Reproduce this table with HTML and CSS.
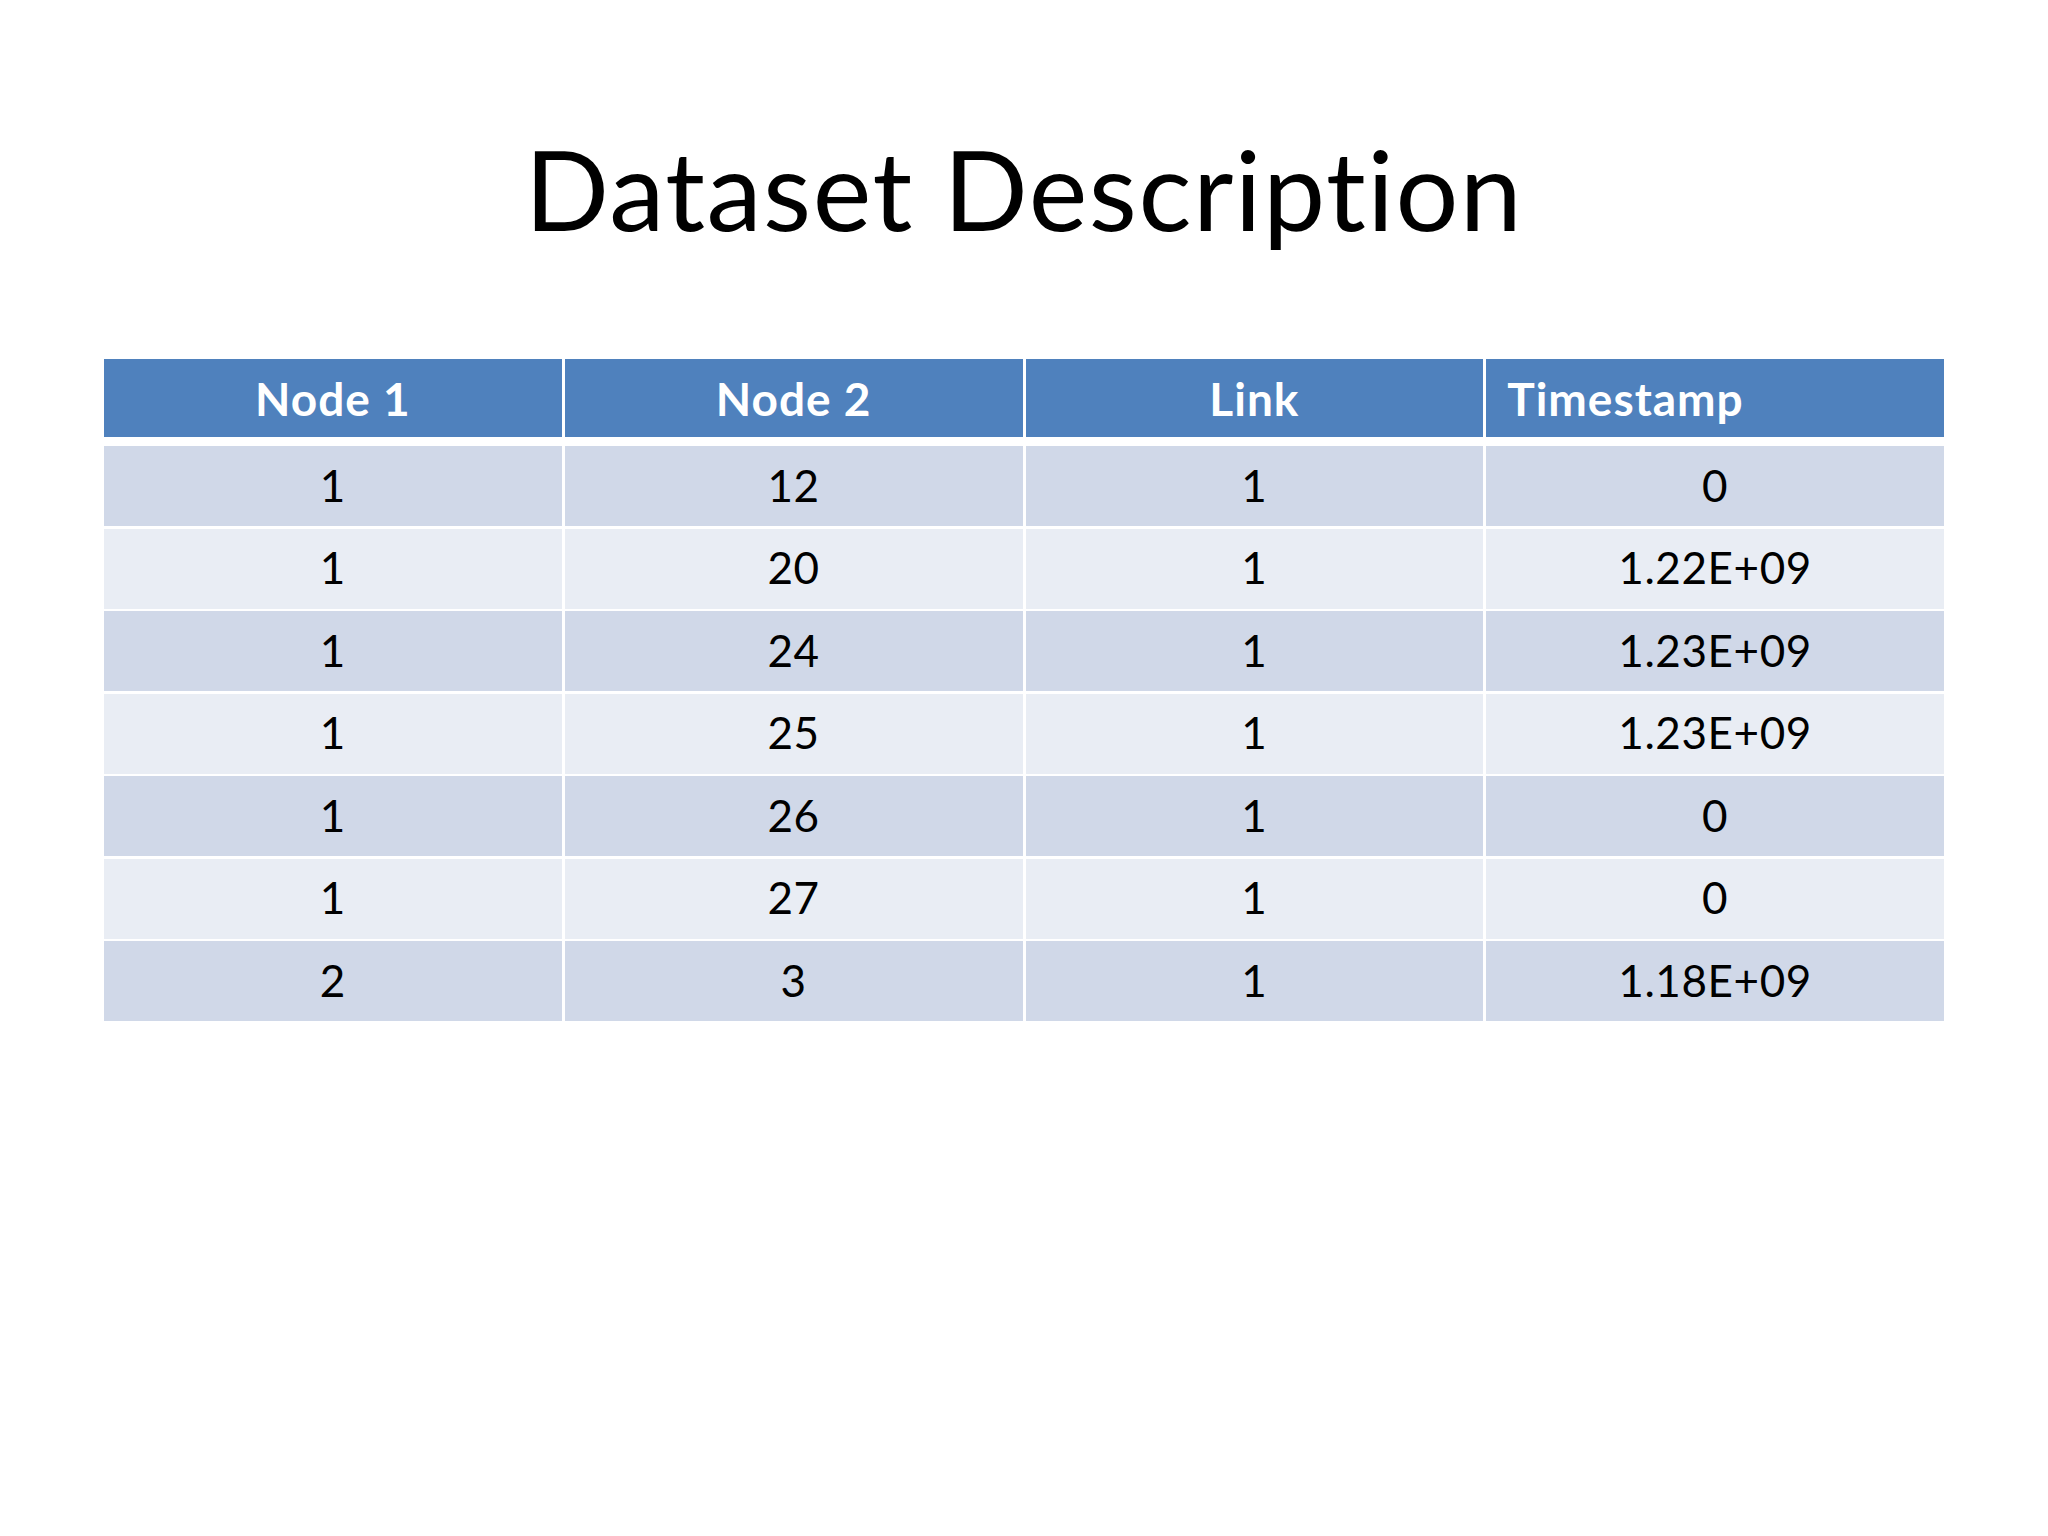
FILE: index.html
```html
<!DOCTYPE html>
<html lang="en">
<head>
<meta charset="utf-8">
<title>Dataset Description</title>
<link rel="stylesheet" href="styles.css">
</head>
<body>
<main class="slide">
  <h1 class="title">Dataset Description</h1>
  <div class="table">
    <div class="row head">
      <div class="cell">Node 1</div>
      <div class="cell">Node 2</div>
      <div class="cell">Link</div>
      <div class="cell left">Timestamp</div>
    </div>
    <div class="row odd">
      <div class="cell">1</div><div class="cell">12</div><div class="cell">1</div><div class="cell">0</div>
    </div>
    <div class="row even">
      <div class="cell">1</div><div class="cell">20</div><div class="cell">1</div><div class="cell">1.22E+09</div>
    </div>
    <div class="row odd">
      <div class="cell">1</div><div class="cell">24</div><div class="cell">1</div><div class="cell">1.23E+09</div>
    </div>
    <div class="row even">
      <div class="cell">1</div><div class="cell">25</div><div class="cell">1</div><div class="cell">1.23E+09</div>
    </div>
    <div class="row odd">
      <div class="cell">1</div><div class="cell">26</div><div class="cell">1</div><div class="cell">0</div>
    </div>
    <div class="row even">
      <div class="cell">1</div><div class="cell">27</div><div class="cell">1</div><div class="cell">0</div>
    </div>
    <div class="row odd">
      <div class="cell">2</div><div class="cell">3</div><div class="cell">1</div><div class="cell">1.18E+09</div>
    </div>
  </div>
</main>
</body>
</html>
```

FILE: styles.css
```css
html, body {
  margin: 0;
  padding: 0;
  background: #ffffff;
}

.slide {
  width: 2048px;
  height: 1536px;
  display: flex;
  flex-direction: column;
  align-items: center;
  font-family: Lato, "Liberation Sans", sans-serif;
  font-variant-ligatures: none;
  color: #000000;
}

.title {
  margin: 0;
  padding-top: 133px;
  font-size: 111px;
  line-height: 110px;
  letter-spacing: 1.5px;
  font-weight: 400;
  text-align: center;
}

.table {
  margin-top: 116px;
  width: 1840px;
  display: flex;
  flex-direction: column;
  gap: 2.5px;
}

.row {
  display: grid;
  grid-template-columns: repeat(4, 1fr);
  column-gap: 3px;
  height: 80px;
}

.row.head {
  height: 78px;
  margin-bottom: 6.5px;
}

.cell {
  display: flex;
  align-items: center;
  justify-content: center;
  font-size: 44px;
  letter-spacing: 0.6px;
  padding-bottom: 3px;
  box-sizing: border-box;
}

.head .cell {
  background: #4f81bd;
  color: #ffffff;
  font-weight: 700;
  font-size: 46px;
  letter-spacing: 1px;
  padding-bottom: 0;
}

.head .cell.left {
  justify-content: flex-start;
  padding-left: 21px;
}

.odd .cell {
  background: #d0d8e8;
}

.even .cell {
  background: #e9edf4;
}
```
